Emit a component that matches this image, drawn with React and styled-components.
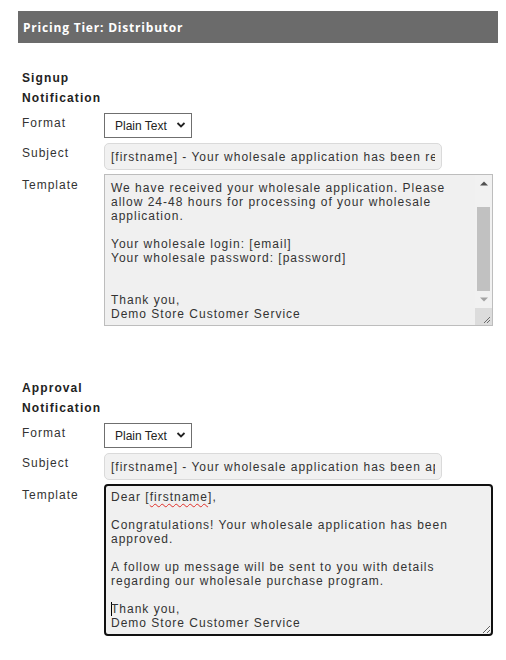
import React, { useEffect, useRef } from "react";
import styled, { createGlobalStyle } from "styled-components";

const GlobalStyle = createGlobalStyle`
  html, body { margin: 0; padding: 0; background: #ffffff; }
  body { font-family: "Liberation Sans", Arial, sans-serif; color: #333; }
`;

const Page = styled.div`
  padding: 11px 8px 20px 18px;
`;

const Header = styled.div`
  width: 480px;
  height: 32px;
  background: #6b6b6b;
  display: flex;
  align-items: center;
  padding-left: 5px;
  box-sizing: border-box;
  font-family: "Open Sans", "Liberation Sans", sans-serif;
  font-weight: 700;
  font-size: 12px;
  letter-spacing: 0.8px;
  color: #ffffff;
`;

const Section = styled.div`
  display: grid;
  grid-template-columns: 82px 390px;
  row-gap: 5px;
  padding-left: 4px;
  margin-top: ${(p) => p.$top}px;
`;

const Heading = styled.div`
  grid-column: 1 / 2;
  font-weight: 700;
  font-size: 12px;
  line-height: 20px;
  letter-spacing: 1.1px;
  color: #222;
`;

const Label = styled.div`
  grid-column: 1 / 2;
  font-size: 12px;
  line-height: 14px;
  padding-top: 3px;
  letter-spacing: 1px;
  color: #333;
`;

const SelectWrap = styled.div`
  position: relative;
  width: 88px;
  height: 25px;
`;

const Select = styled.select`
  appearance: none;
  -webkit-appearance: none;
  width: 88px;
  height: 25px;
  box-sizing: border-box;
  border: 1px solid #6f6f6f;
  border-radius: 0;
  background: #fff;
  padding: 0 0 0 10px;
  font-family: "Liberation Sans", Arial, sans-serif;
  font-size: 12px;
  color: #222;
  outline: none;
`;

const Chevron = styled.svg`
  position: absolute;
  right: 6px;
  top: 8px;
  pointer-events: none;
`;

const TextInput = styled.input`
  width: 338px;
  height: 27px;
  box-sizing: border-box;
  border: 1px solid #dadada;
  border-radius: 5px;
  background: #f1f1f1;
  padding: 0 6px;
  font-family: "Liberation Sans", Arial, sans-serif;
  font-size: 12px;
  letter-spacing: 1px;
  color: #333;
  outline: none;
`;

const ScrollBox = styled.div`
  width: 389px;
  height: 152px;
  box-sizing: border-box;
  border: 1px solid #bdbdbd;
  background: #f0f0f0;
  display: flex;
  margin-top: -1px;
`;

const InnerArea = styled.textarea`
  flex: 1;
  min-width: 0;
  height: 100%;
  box-sizing: border-box;
  border: 0;
  background: transparent;
  padding: 4px 6px;
  font-family: "Liberation Sans", Arial, sans-serif;
  font-size: 12px;
  line-height: 14px;
  letter-spacing: 1px;
  color: #333;
  outline: none;
  resize: none;
  overflow: hidden;
`;

const ScrollBar = styled.div`
  width: 17px;
  flex: none;
  display: flex;
  flex-direction: column;
  background: #f1f1f1;
`;

const ArrowButton = styled.div`
  height: 17px;
  flex: none;
  display: flex;
  align-items: center;
  justify-content: center;
`;

const Track = styled.div`
  flex: 1;
  display: flex;
  flex-direction: column;
  justify-content: flex-end;
  align-items: center;
`;

const Thumb = styled.div`
  width: 13px;
  height: 84px;
  background: #c1c1c1;
`;

const Corner = styled.div`
  height: 17px;
  flex: none;
  background: #dcdcdc;
  display: flex;
  align-items: flex-end;
  justify-content: flex-end;
`;

const FocusedEditor = styled.div`
  width: 389px;
  height: 152px;
  box-sizing: border-box;
  border: 2px solid #111;
  border-radius: 4px;
  background: #f0f0f0;
  padding: 4px 5px;
  font-size: 12px;
  line-height: 14px;
  letter-spacing: 1px;
  color: #333;
  white-space: pre-wrap;
  overflow: auto;
  resize: both;
  margin-top: -1px;
`;

const Misspelled = styled.span`
  text-decoration: underline wavy #e0302a;
  text-decoration-thickness: 1px;
  text-underline-offset: 2px;
`;

const Caret = styled.span`
  display: inline-block;
  width: 0;
  height: 14px;
  border-left: 1px solid #000;
  vertical-align: top;
  margin-right: -1px;
`;

const signupText =
  "Dear [firstname],\n\nWe have received your wholesale application. Please allow 24-48 hours for processing of your wholesale application.\n\nYour wholesale login: [email]\nYour wholesale password: [password]\n\n\nThank you,\nDemo Store Customer Service";

function FormatSelect() {
  return (
    <SelectWrap>
      <Select defaultValue="text">
        <option value="text">Plain Text</option>
        <option value="html">HTML</option>
      </Select>
      <Chevron width="10" height="8" viewBox="0 0 10 8">
        <path d="M1.5 2 L5 5.5 L8.5 2" fill="none" stroke="#222" strokeWidth="1.8" />
      </Chevron>
    </SelectWrap>
  );
}

function ScrolledTemplate({ value }) {
  const ref = useRef(null);
  useEffect(() => {
    if (ref.current) ref.current.scrollTop = ref.current.scrollHeight;
  }, []);
  return (
    <ScrollBox>
      <InnerArea ref={ref} defaultValue={value} spellCheck={false} />
      <ScrollBar>
        <ArrowButton>
          <svg width="8" height="5" viewBox="0 0 8 5">
            <polygon points="0,4.5 8,4.5 4,0.5" fill="#505050" />
          </svg>
        </ArrowButton>
        <Track>
          <Thumb />
        </Track>
        <ArrowButton>
          <svg width="8" height="5" viewBox="0 0 8 5">
            <polygon points="0,0.5 8,0.5 4,4.5" fill="#a3a3a3" />
          </svg>
        </ArrowButton>
        <Corner>
          <svg width="17" height="17" viewBox="0 0 17 17">
            <path d="M15 9 L9 15 M15 12 L12 15" stroke="#6a6a6a" strokeWidth="1" />
          </svg>
        </Corner>
      </ScrollBar>
    </ScrollBox>
  );
}

export default function App() {
  return (
    <Page>
      <GlobalStyle />
      <Header>Pricing Tier: Distributor</Header>

      <Section $top={25}>
        <Heading>Signup Notification</Heading>
        <div />
        <Label>Format</Label>
        <FormatSelect />
        <Label>Subject</Label>
        <TextInput defaultValue="[firstname] - Your wholesale application has been received" />
        <Label>Template</Label>
        <ScrolledTemplate value={signupText} />
      </Section>

      <Section $top={52}>
        <Heading>Approval Notification</Heading>
        <div />
        <Label>Format</Label>
        <FormatSelect />
        <Label>Subject</Label>
        <TextInput defaultValue="[firstname] - Your wholesale application has been approved" />
        <Label>Template</Label>
        <FocusedEditor>
          {"Dear ["}
          <Misspelled>firstname</Misspelled>
          {"],\n\nCongratulations! Your wholesale application has been approved.\n\nA follow up message will be sent to you with details regarding our wholesale purchase program.\n\n"}
          <Caret />
          {"Thank you,\nDemo Store Customer Service"}
        </FocusedEditor>
      </Section>
    </Page>
  );
}
